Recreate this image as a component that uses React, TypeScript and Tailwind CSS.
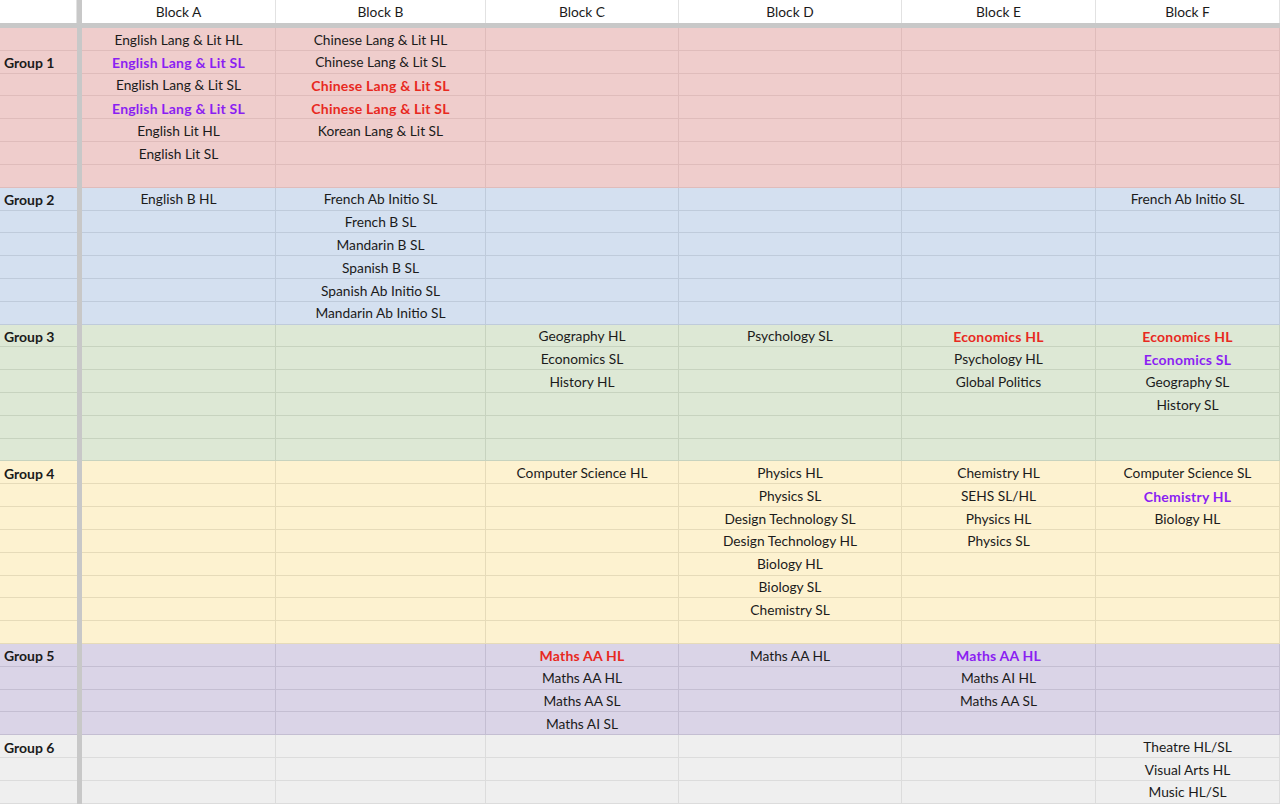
import React from "react";

type Cell = string | { t: string; c: "red" | "purple" };

interface Group {
  name: string;
  labelRow: number;
  rows: number;
  bg: string;
  line: string;
  cols: Cell[][];
}

const P = (t: string): Cell => ({ t, c: "purple" });
const R = (t: string): Cell => ({ t, c: "red" });

const groups: Group[] = [
  {
    name: "Group 1",
    labelRow: 1,
    rows: 7,
    bg: "bg-[#efcdcc]",
    line: "border-[#dfbcbb]",
    cols: [
      ["English Lang & Lit HL", P("English Lang & Lit SL"), "English Lang & Lit SL", P("English Lang & Lit SL"), "English Lit HL", "English Lit SL"],
      ["Chinese Lang & Lit HL", "Chinese Lang & Lit SL", R("Chinese Lang & Lit SL"), R("Chinese Lang & Lit SL"), "Korean Lang & Lit SL"],
      [],
      [],
      [],
      [],
    ],
  },
  {
    name: "Group 2",
    labelRow: 0,
    rows: 6,
    bg: "bg-[#d4e0f0]",
    line: "border-[#bfcbdb]",
    cols: [
      ["English B HL"],
      ["French Ab Initio SL", "French B SL", "Mandarin B SL", "Spanish B SL", "Spanish Ab Initio SL", "Mandarin Ab Initio SL"],
      [],
      [],
      [],
      ["French Ab Initio SL"],
    ],
  },
  {
    name: "Group 3",
    labelRow: 0,
    rows: 6,
    bg: "bg-[#dde8d5]",
    line: "border-[#c7d3bf]",
    cols: [
      [],
      [],
      ["Geography HL", "Economics SL", "History HL"],
      ["Psychology SL"],
      [R("Economics HL"), "Psychology HL", "Global Politics"],
      [R("Economics HL"), P("Economics SL"), "Geography SL", "History SL"],
    ],
  },
  {
    name: "Group 4",
    labelRow: 0,
    rows: 8,
    bg: "bg-[#fdf2d0]",
    line: "border-[#e6dbb9]",
    cols: [
      [],
      [],
      ["Computer Science HL"],
      ["Physics HL", "Physics SL", "Design Technology SL", "Design Technology HL", "Biology HL", "Biology SL", "Chemistry SL"],
      ["Chemistry HL", "SEHS SL/HL", "Physics HL", "Physics SL"],
      ["Computer Science SL", P("Chemistry HL"), "Biology HL"],
    ],
  },
  {
    name: "Group 5",
    labelRow: 0,
    rows: 4,
    bg: "bg-[#dad4e7]",
    line: "border-[#c4bed2]",
    cols: [
      [],
      [],
      [R("Maths AA HL"), "Maths AA HL", "Maths AA SL", "Maths AI SL"],
      ["Maths AA HL"],
      [P("Maths AA HL"), "Maths AI HL", "Maths AA SL"],
      [],
    ],
  },
  {
    name: "Group 6",
    labelRow: 0,
    rows: 3,
    bg: "bg-[#efefef]",
    line: "border-[#dcdcdc]",
    cols: [[], [], [], [], [], ["Theatre HL/SL", "Visual Arts HL", "Music HL/SL"]],
  },
];

const widths = ["w-[194px]", "w-[210px]", "w-[193px]", "w-[223px]", "w-[194px]", "w-[184px]"];
const blocks = ["Block A", "Block B", "Block C", "Block D", "Block E", "Block F"];

const CellText: React.FC<{ cell?: Cell }> = ({ cell }) => {
  if (!cell) return null;
  if (typeof cell === "string") return <span>{cell}</span>;
  return (
    <span
      className={
        cell.c === "red"
          ? "text-[14px] tracking-[0.2px] font-bold text-[#e8291f]"
          : "text-[14px] tracking-[0.2px] font-bold text-[#8b1ff2]"
      }
    >
      {cell.t}
    </span>
  );
};

export default function App() {
  return (
    <div className="w-[1280px] h-[804px] overflow-hidden bg-white text-[13.75px] text-[#1b1b1b] font-['Lato','Liberation_Sans',sans-serif]">
      {/* header */}
      <div className="flex h-[23px]">
        <div className="w-[77px] border-r border-[#e2e2e2]" />
        <div className="w-[5px] bg-[#c8c8c8]" />
        {blocks.map((b, i) => (
          <div key={b} className={`${widths[i]} flex items-center justify-center pt-[2px] border-r border-[#e2e2e2]`}>
            {b}
          </div>
        ))}
      </div>
      <div className="h-[5px] bg-[#c8c8c8]" />

      {groups.map((g) => (
        <div key={g.name} className={g.bg}>
          {Array.from({ length: g.rows }).map((_, r) => (
            <div key={r} className="flex h-[22.82px]">
              <div className={`w-[77px] flex items-center pl-1 pt-[2px] text-[14px] font-bold border-b ${g.line}`}>
                {r === g.labelRow ? g.name : ""}
              </div>
              <div className="w-[5px] bg-[#c8c8c8]" />
              {g.cols.map((col, ci) => (
                <div
                  key={ci}
                  className={`${widths[ci]} flex items-center justify-center pt-[2px] whitespace-nowrap border-b border-r ${g.line}`}
                >
                  <CellText cell={col[r]} />
                </div>
              ))}
            </div>
          ))}
        </div>
      ))}
    </div>
  );
}
